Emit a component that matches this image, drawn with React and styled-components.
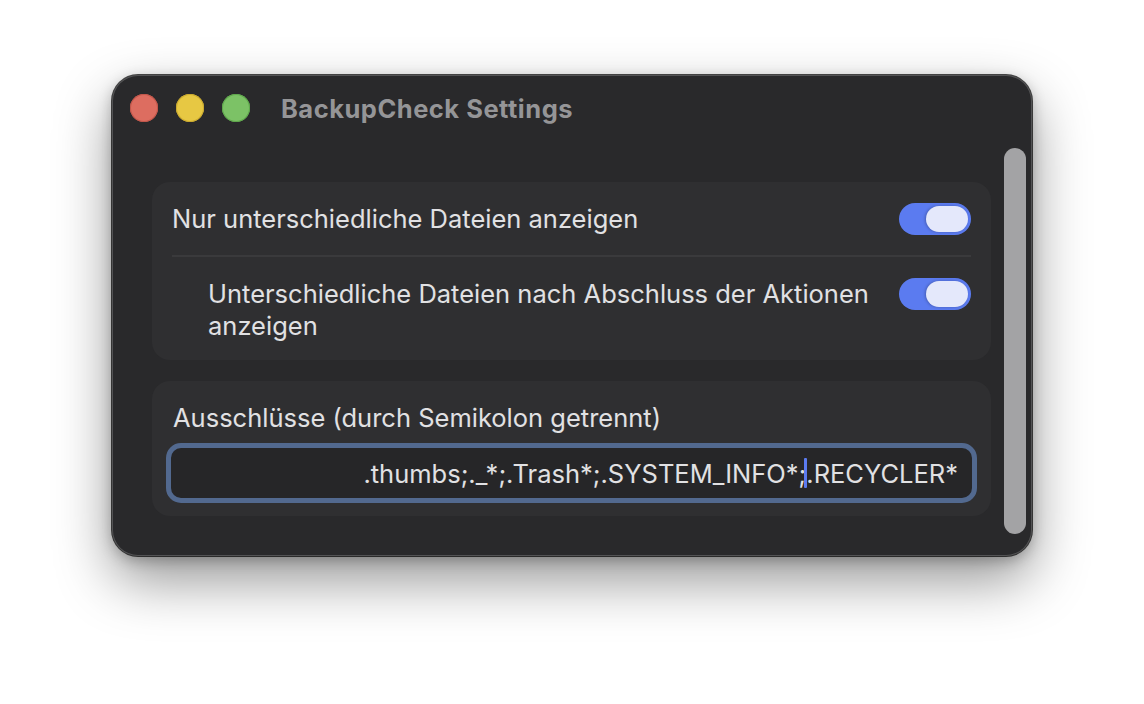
import React from "react";
import styled, { createGlobalStyle } from "styled-components";

const Global = createGlobalStyle`
  html, body { margin: 0; padding: 0; background: #ffffff; }
  body { font-family: Inter, "Noto Sans", "Liberation Sans", sans-serif; -webkit-font-smoothing: antialiased; }
`;

const Page = styled.div`
  width: 1144px;
  height: 704px;
  display: flex;
  justify-content: center;
  align-items: flex-start;
  padding-top: 75px;
  box-sizing: border-box;
  background: #ffffff;
`;

const Window = styled.div`
  width: 920px;
  height: 481px;
  box-sizing: border-box;
  background: #29292b;
  border-radius: 26px;
  display: flex;
  flex-direction: column;
  box-shadow:
    0 0 0 1px rgba(0, 0, 0, 0.7),
    inset 0 0 0 1px rgba(255, 255, 255, 0.2),
    0 24px 56px rgba(0, 0, 0, 0.42),
    0 4px 14px rgba(0, 0, 0, 0.25);
  overflow: hidden;
`;

const TitleBar = styled.div`
  height: 66px;
  flex: none;
  display: flex;
  align-items: center;
  padding-left: 18px;
  box-sizing: border-box;
`;

const Lights = styled.div`
  display: flex;
  gap: 18px;
`;

const Light = styled.span`
  width: 28px;
  height: 28px;
  border-radius: 50%;
  background: ${(p) => p.$c};
  box-shadow: inset 0 0 0 1px ${(p) => p.$b};
`;

const Title = styled.div`
  margin-left: 31px;
  font-size: 25.5px;
  font-weight: 700;
  color: #959597;
  letter-spacing: 0.5px;
`;

const Body = styled.div`
  flex: 1;
  display: flex;
  min-height: 0;
`;

const Content = styled.div`
  flex: 1;
  padding: 41px 13px 0 40px;
  display: flex;
  flex-direction: column;
  gap: 21px;
`;

const Card = styled.div`
  background: #2f2f31;
  border-radius: 18px;
  padding: ${(p) => p.$pad || "0 20px"};
  display: flex;
  flex-direction: column;
`;

const Row = styled.div`
  display: flex;
  align-items: ${(p) => (p.$top ? "flex-start" : "center")};
  padding: ${(p) => (p.$top ? "21px 0 18px 36px" : "21px 0 20px")};
  & + & {
    border-top: 2px solid #3a3a3c;
  }
`;

const Label = styled.div`
  flex: 1;
  font-size: 25.5px;
  line-height: 32px;
  color: #e1e1e3;
  padding-right: 28px;
`;

const Track = styled.div`
  width: 72px;
  height: 32px;
  flex: none;
  border-radius: 16px;
  background: #5b7bf0;
  display: flex;
  align-items: center;
  justify-content: flex-end;
  padding-right: 3px;
  box-sizing: border-box;
`;

const Knob = styled.div`
  width: 42px;
  height: 26px;
  border-radius: 13px;
  background: #e4e8fb;
  box-shadow: -1px 0 3px rgba(0, 0, 0, 0.25);
`;

const FieldLabel = styled.div`
  font-size: 25.5px;
  line-height: 32px;
  color: #e1e1e3;
  padding-left: 7px;
  margin-bottom: 9px;
`;

const Field = styled.div`
  height: 60px;
  flex: none;
  box-sizing: border-box;
  border: 5px solid #52698f;
  border-radius: 15px;
  background: #262628;
  display: flex;
  align-items: center;
  justify-content: flex-end;
  padding: 0 14px 0 0;
  font-size: 25.5px;
  color: #e1e1e3;
  white-space: nowrap;
  overflow: hidden;
`;

const Caret = styled.span`
  display: inline-block;
  width: 3px;
  height: 30px;
  background: #5b7bf0;
  vertical-align: middle;
  margin: 0 -1px 0 -2px;
  border-radius: 1px;
`;

const ScrollTrack = styled.div`
  width: 22px;
  flex: none;
  padding: 7px 6px 22px 0;
  display: flex;
`;

const Thumb = styled.div`
  flex: 1;
  width: 22px;
  border-radius: 11px;
  background: #a3a3a5;
`;

function Toggle() {
  return (
    <Track>
      <Knob />
    </Track>
  );
}

export default function App() {
  return (
    <>
      <Global />
      <Page>
        <Window>
          <TitleBar>
            <Lights>
              <Light $c="#dd6d60" $b="#c2564a" />
              <Light $c="#e7c843" $b="#caa92e" />
              <Light $c="#7cc266" $b="#5ea74b" />
            </Lights>
            <Title>BackupCheck Settings</Title>
          </TitleBar>
          <Body>
            <Content>
              <Card>
                <Row>
                  <Label>Nur unterschiedliche Dateien anzeigen</Label>
                  <Toggle />
                </Row>
                <Row $top>
                  <Label>
                    Unterschiedliche Dateien nach Abschluss der Aktionen anzeigen
                  </Label>
                  <Toggle />
                </Row>
              </Card>
              <Card $pad="21px 14px 13px 14px">
                <FieldLabel>Ausschlüsse (durch Semikolon getrennt)</FieldLabel>
                <Field>
                  <span>.thumbs;._*;.Trash*;.SYSTEM_INFO*;</span>
                  <Caret />
                  <span>.RECYCLER*</span>
                </Field>
              </Card>
            </Content>
            <ScrollTrack>
              <Thumb />
            </ScrollTrack>
          </Body>
        </Window>
      </Page>
    </>
  );
}
